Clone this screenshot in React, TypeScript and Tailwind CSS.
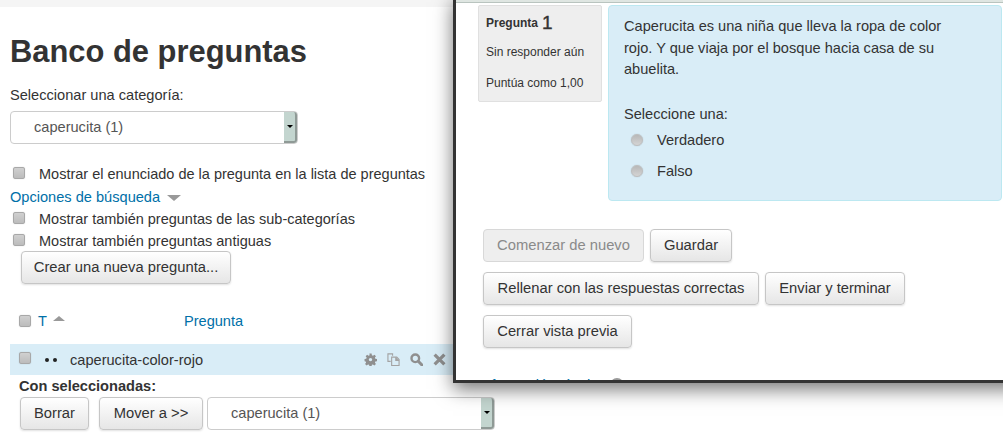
const fontStack = "font-['Liberation_Sans',Arial,sans-serif]";

function Checkbox({ className = '' }: { className?: string }) {
  return (
    <span className={`block size-3 shrink-0 rounded-[2px] border border-[#a8a8a8] bg-gradient-to-b from-[#d0d0d0] to-[#bcbcbc] shadow-[0_0_1px_rgba(0,0,0,0.25)] ${className}`} />
  );
}

function Radio() {
  return (
    <span className="-mt-[2px] block size-3 shrink-0 rounded-full border border-[#bdbdbd] bg-gradient-to-b from-[#b8b8b8] to-[#d4d4d4] shadow-[0_0_1px_rgba(0,0,0,0.3)]" />
  );
}

function Button({ children, disabled, className = '' }: { children: React.ReactNode; disabled?: boolean; className?: string }) {
  return (
    <button
      className={`flex h-[33px] items-center justify-center rounded-[4px] border text-[14.75px] ${
        disabled
          ? 'border-[#d8d8d8] bg-[#eeeeee] text-[#8a8a8a]'
          : 'border-[#c6c6c6] bg-gradient-to-b from-[#ffffff] to-[#e6e6e6] text-[#333333] shadow-[0_1px_2px_rgba(0,0,0,0.12)]'
      } ${className}`}
    >
      {children}
    </button>
  );
}

function CategorySelect({ className = '' }: { className?: string }) {
  return (
    <div className={`flex h-[33px] items-stretch rounded-[4px] border border-[#cccccc] bg-white ${className}`}>
      <span className="flex flex-1 items-center pl-[23px] text-[14.6px] text-[#555555]">caperucita (1)</span>
      <span className="flex w-[13px] items-center justify-center rounded-r-[3px] border-r-2 border-b-2 border-[#8f9a96] bg-[#c3d5cf]">
        <span className="block size-0 border-x-[3px] border-t-[3px] border-x-transparent border-t-black" />
      </span>
    </div>
  );
}

function CheckRow({ label, className = '' }: { label: string; className?: string }) {
  return (
    <div className={`flex h-[22px] items-center ${className}`}>
      <Checkbox className="ml-[3px] mr-[14px] -mt-[2px]" />
      <span className="mt-[2px] text-[14.5px]">{label}</span>
    </div>
  );
}

function RowIcons() {
  return (
    <div className="ml-[160px] flex items-center gap-[10px] text-[#8f8f8f]">
      <svg width="13" height="13" viewBox="0 0 24 24" fill="currentColor">
        <path fillRule="evenodd" d="M10 1h4l.6 3.2 2 .8L19.3 3l2.8 2.8-2 2.7.8 2 3.1.5v4l-3.1.6-.8 2 1.9 2.6-2.8 2.8-2.7-1.9-2 .8-.5 3.1h-4l-.6-3.1-2-.8-2.6 1.9-2.8-2.8 1.9-2.7-.8-2L1 15v-4l3.1-.5.8-2-1.9-2.7L5.8 3l2.6 2 2-.8L10 1zm2 8a3.2 3.2 0 1 0 0 6.4 3.2 3.2 0 0 0 0-6.4z" />
      </svg>
      <svg width="13" height="13" viewBox="0 0 14 14" fill="none" stroke="#a3a3a3" strokeWidth="1.2">
        <path d="M6 3V1H1v8h3" />
        <path d="M5 4.5h5.5L13 7v6.5H5z" />
        <path d="M9.5 4.5V8H13" fill="#a3a3a3" />
      </svg>
      <svg width="13" height="13" viewBox="0 0 13 13" fill="none" stroke="currentColor">
        <circle cx="5.3" cy="5.3" r="3.8" strokeWidth="2.4" />
        <path d="M8.3 8.3 12 12" strokeWidth="3" strokeLinecap="round" />
      </svg>
      <svg width="13" height="13" viewBox="0 0 12 12" fill="none" stroke="currentColor" strokeWidth="3">
        <path d="M1.5 1.5l9 9M10.5 1.5l-9 9" />
      </svg>
    </div>
  );
}

function PreviewWindow() {
  return (
    <div className="absolute left-[453px] top-[-4px] flex h-[387px] w-[600px] flex-col overflow-hidden border-[3px] border-[#333333] bg-white shadow-[0_6px_18px_rgba(0,0,0,0.55)]">
      <div className="h-[4px] shrink-0 border-b border-[#b9c4bf] bg-[#dfe6e2]" />
      <div className="flex shrink-0 items-start pl-[22px] pt-[2px]">
        <div className="h-[97px] w-[124px] rounded-[2px] border border-[#e0e0e0] bg-[#eeeeee] pl-[7px] pt-[5px]">
          <div className="flex h-[24px] items-center gap-[4px] text-[12px] font-bold">
            Pregunta <span className="text-[19px] font-normal [-webkit-text-stroke:0.4px_#333333]">1</span>
          </div>
          <div className="mt-[8px] text-[12px] leading-[18px]">Sin responder aún</div>
          <div className="mt-[13px] text-[12px] leading-[18px]">Puntúa como 1,00</div>
        </div>
        <div className="ml-[6px] h-[196px] w-[394px] rounded-[4px] border border-[#bce8f1] bg-[#d9edf7] pl-[15px] pt-[10px] text-[14.6px] leading-[21.5px]">
          <p className="w-[340px]">Caperucita es una niña que lleva la ropa de color rojo. Y que viaja por el bosque hacia casa de su abuelita.</p>
          <p className="mt-[23px]">Seleccione una:</p>
          <div className="mt-[4px] flex h-[23px] items-center pl-[7px]">
            <Radio />
            <span className="ml-[14px]">Verdadero</span>
          </div>
          <div className="mt-[8px] flex h-[23px] items-center pl-[7px]">
            <Radio />
            <span className="ml-[14px]">Falso</span>
          </div>
        </div>
      </div>
      <div className="mt-[28px] flex flex-col gap-[10px] pl-[27px]">
        <div className="flex gap-[6px]">
          <Button disabled className="w-[161px]">Comenzar de nuevo</Button>
          <Button className="w-[82px]">Guardar</Button>
        </div>
        <div className="flex gap-[6px]">
          <Button className="w-[276px]">Rellenar con las respuestas correctas</Button>
          <Button className="w-[140px]">Enviar y terminar</Button>
        </div>
        <div className="flex">
          <Button className="w-[149px]">Cerrar vista previa</Button>
        </div>
      </div>
      <div className="mt-[27px] flex items-center gap-[4px] pl-[23px] text-[14.6px] leading-[20px] text-[#0070a8]">
        Información técnica
        <span className="block size-[14px] rounded-full border-2 border-[#999999]" />
      </div>
    </div>
  );
}

export default function App() {
  return (
    <div className={`relative h-[437px] w-[1003px] overflow-hidden bg-white text-[#333333] ${fontStack}`}>
      <div className="h-[7px] bg-[#f5f5f5]" />
      <div className="flex flex-col pl-[10px]">
        <h1 className="mt-[25px] h-[40px] text-[30.9px] font-bold leading-[40px]">Banco de preguntas</h1>
        <div className="mt-[13px] text-[14.6px] leading-[20px]">Seleccionar una categoría:</div>
        <CategorySelect className="mt-[6px] w-[288px]" />
        <CheckRow label="Mostrar el enunciado de la pregunta en la lista de preguntas" className="mt-[19px]" />
        <div className="flex h-[23px] items-center gap-[7px] text-[14.6px] text-[#0070a8]">
          <span className="mt-[2px]">Opciones de búsqueda</span>
          <span className="mt-[2px] block size-0 border-x-[7px] border-t-[6px] border-x-transparent border-t-[#999999]" />
        </div>
        <CheckRow label="Mostrar también preguntas de las sub-categorías" />
        <CheckRow label="Mostrar también preguntas antiguas" />
        <Button className="ml-[11px] mt-[-1px] w-[210px]">Crear una nueva pregunta...</Button>
        <div className="mt-[25px] flex h-[24px] items-center text-[14.6px] text-[#0070a8]">
          <Checkbox className="ml-[9px]" />
          <span className="ml-[7px] mt-[2px]">T</span>
          <span className="mb-[6px] ml-[6px] block size-0 border-x-[6px] border-b-[5px] border-x-transparent border-b-[#999999]" />
          <span className="ml-[119px] mt-[2px]">Pregunta</span>
        </div>
        <div className="mt-[11px] flex h-[31px] w-[445px] items-center bg-[#d9edf7] text-[14.6px]">
          <Checkbox className="ml-[9px] -mt-[4px]" />
          <span className="ml-[14px] flex gap-[4px]">
            <span className="block size-[4px] rounded-full bg-[#222222]" />
            <span className="block size-[4px] rounded-full bg-[#222222]" />
          </span>
          <span className="ml-[13px] mt-[2px] w-[134px] whitespace-nowrap">caperucita-color-rojo</span>
          <RowIcons />
        </div>
        <div className="ml-[9px] mt-[1px] h-[20px] text-[14.6px] font-bold leading-[20px]">Con seleccionadas:</div>
        <div className="ml-[10px] mt-[1px] flex">
          <Button className="w-[69px]">Borrar</Button>
          <Button className="ml-[10px] w-[104px]">Mover a &gt;&gt;</Button>
          <CategorySelect className="ml-[4px] w-[288px]" />
        </div>
      </div>
      <PreviewWindow />
    </div>
  );
}
